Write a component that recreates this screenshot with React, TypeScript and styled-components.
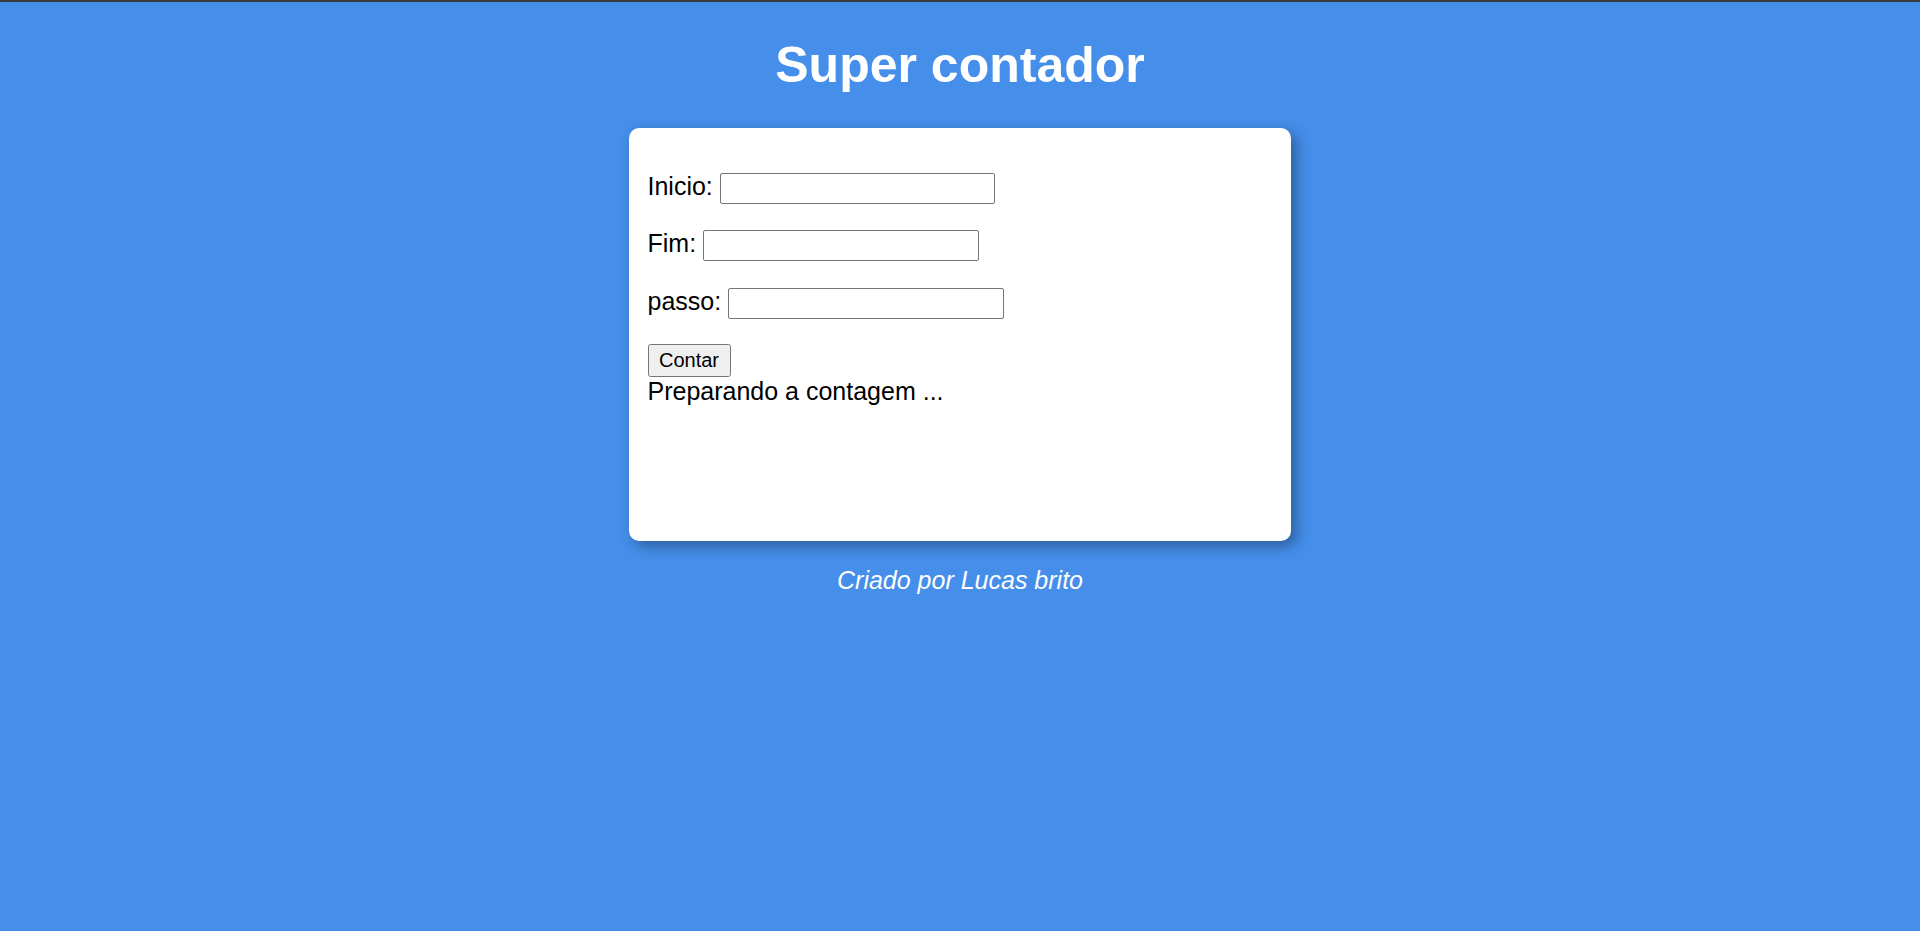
import React from "react";
import styled, { createGlobalStyle } from "styled-components";

const GlobalStyle = createGlobalStyle`
  html, body {
    margin: 0;
    padding: 0;
    background: #458eea;
  }
  body {
    font-family: "Liberation Sans", Arial, sans-serif;
    min-height: 931px;
  }
`;

const Page = styled.div`
  min-height: 931px;
  background: #458eea;
  border-top: 2px solid #3b3b3b;
  box-sizing: border-box;
  display: flex;
  flex-direction: column;
  align-items: center;
  overflow: hidden;
`;

const Title = styled.h1`
  margin: 35px 0 33.5px;
  font-size: 50px;
  font-weight: 700;
  line-height: 57.5px;
  color: #ffffff;
  text-align: center;
`;

const Card = styled.main`
  box-sizing: border-box;
  width: 662.5px;
  height: 412.5px;
  padding: 18.75px;
  background: #ffffff;
  border-radius: 10px;
  box-shadow: 5px 5px 14px rgba(0, 0, 0, 0.35);
`;

const Row = styled.p`
  display: flex;
  align-items: baseline;
  column-gap: 7px;
  height: 32.5px;
  margin: 25px 0;
  font-size: 25px;
  line-height: 28.75px;
  color: #000;
`;

const Label = styled.label`
  white-space: nowrap;
`;

const Input = styled.input`
  box-sizing: border-box;
  width: 275.5px;
  height: 31px;
  padding: 0 2.5px;
  border: 1px solid #767676;
  border-radius: 2px;
  background: #fff;
  font-family: "Liberation Sans", Arial, sans-serif;
  font-size: 20px;
  line-height: 23px;
  outline: none;
`;

const Button = styled.button`
  display: block;
  box-sizing: border-box;
  height: 32.4px;
  padding: 0 10.5px;
  border: 1px solid #767676;
  border-radius: 2.5px;
  background: #efefef;
  color: #000;
  font-family: "Liberation Sans", Arial, sans-serif;
  font-size: 20px;
  line-height: 23px;
  cursor: pointer;
`;

const Result = styled.div`
  font-size: 25px;
  line-height: 28.75px;
  color: #000;
`;

const Footer = styled.p`
  margin: 25px 0;
  font-size: 25px;
  line-height: 28.75px;
  font-style: italic;
  color: #ffffff;
  text-align: center;
`;

const fields = [
  { id: "inicio", label: "Inicio:" },
  { id: "fim", label: "Fim:" },
  { id: "passo", label: "passo:" },
];

export default function App() {
  return (
    <>
      <GlobalStyle />
      <Page>
        <Title>Super contador</Title>
        <Card>
          {fields.map((f) => (
            <Row key={f.id}>
              <Label htmlFor={f.id}>{f.label}</Label>
              <Input type="number" id={f.id} />
            </Row>
          ))}
          <Button type="button">Contar</Button>
          <Result>Preparando a contagem ...</Result>
        </Card>
        <Footer>Criado por Lucas brito</Footer>
      </Page>
    </>
  );
}
